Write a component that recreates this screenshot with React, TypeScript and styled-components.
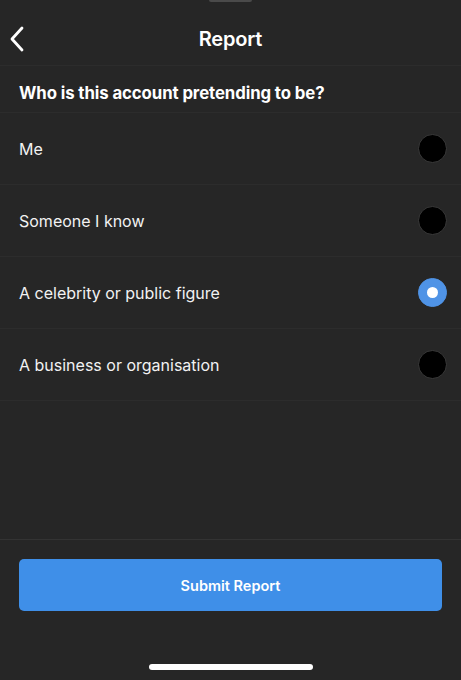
import React, { useState } from "react";
import styled, { createGlobalStyle } from "styled-components";

const options = [
    "Me",
    "Someone I know",
    "A celebrity or public figure",
    "A business or organisation",
];

const GlobalStyle = createGlobalStyle`
    html, body {
        margin: 0;
        padding: 0;
        background: #262626;
    }
    body {
        font-family: Inter, "Noto Sans", "Liberation Sans", sans-serif;
        -webkit-font-smoothing: antialiased;
    }
`;

const ChevronLeft = () => (
    <svg width="16" height="26" viewBox="0 0 16 26" fill="none">
        <path d="M13 2 L3 13 L13 24" stroke="#fff" strokeWidth="2.8" strokeLinecap="round" strokeLinejoin="round" />
    </svg>
);

const App = () => {
    const [selected, setSelected] = useState(2);

    return (
        <Screen>
            <GlobalStyle />
            <Grabber />
            <Header>
                <BackButton aria-label="Back">
                    <ChevronLeft />
                </BackButton>
                <Title>Report</Title>
            </Header>
            <Question>Who is this account pretending to be?</Question>
            <List>
                {options.map((label, i) => (
                    <Option key={label} onClick={() => setSelected(i)}>
                        <span>{label}</span>
                        <Radio checked={selected === i} />
                    </Option>
                ))}
            </List>
            <Footer>
                <SubmitButton>Submit Report</SubmitButton>
            </Footer>
            <HomeIndicator />
        </Screen>
    );
};

const Screen = styled.div`
    position: relative;
    width: 461px;
    height: 680px;
    background: #262626;
    color: #fff;
    display: flex;
    flex-direction: column;
    overflow: hidden;
`;

const Grabber = styled.div`
    position: absolute;
    top: 0;
    left: 209px;
    width: 43px;
    height: 2px;
    border-radius: 0 0 2px 2px;
    background: #4a4a4a;
`;

const Header = styled.div`
    position: relative;
    height: 66px;
    flex-shrink: 0;
    display: flex;
    align-items: center;
    justify-content: center;
    border-bottom: 1px solid #2c2c2c;
    box-sizing: border-box;
`;

const BackButton = styled.button`
    position: absolute;
    left: 9px;
    top: 26px;
    padding: 0;
    border: 0;
    background: none;
    display: flex;
    cursor: pointer;
`;

const Title = styled.div`
    font-size: 20px;
    font-weight: 600;
    letter-spacing: -0.2px;
    margin-top: 12px;
`;

const Question = styled.div`
    height: 47px;
    flex-shrink: 0;
    box-sizing: border-box;
    padding: 17px 19px 0;
    font-size: 16.8px;
    font-weight: 700;
    letter-spacing: -0.1px;
    border-bottom: 1px solid #2c2c2c;
`;

const List = styled.div`
    display: flex;
    flex-direction: column;
    flex: 1;
`;

const Option = styled.div`
    height: 72px;
    box-sizing: border-box;
    padding: 0 14px 0 19px;
    display: flex;
    align-items: center;
    justify-content: space-between;
    border-bottom: 1px solid #2c2c2c;
    font-size: 16px;
    font-weight: 400;
    color: #f2f2f2;
    cursor: pointer;
`;

const Radio = styled.div<{ checked: boolean }>`
    width: 29px;
    height: 29px;
    box-sizing: border-box;
    border-radius: 50%;
    background: ${(p) => (p.checked ? "#4f93e6" : "#000")};
    border: 1px solid ${(p) => (p.checked ? "#4f93e6" : "#3a3a3a")};
    display: flex;
    align-items: center;
    justify-content: center;
    &::after {
        content: "";
        display: ${(p) => (p.checked ? "block" : "none")};
        width: 11px;
        height: 11px;
        border-radius: 50%;
        background: #fff;
    }
`;

const Footer = styled.div`
    height: 141px;
    flex-shrink: 0;
    box-sizing: border-box;
    border-top: 1px solid #333;
    padding: 19px 19px 0;
`;

const SubmitButton = styled.button`
    width: 100%;
    height: 52px;
    border: 0;
    border-radius: 5px;
    background: #3f8fe8;
    color: #fff;
    font-family: inherit;
    font-size: 14.5px;
    font-weight: 600;
    cursor: pointer;
`;

const HomeIndicator = styled.div`
    position: absolute;
    left: 149px;
    bottom: 10px;
    width: 164px;
    height: 6px;
    border-radius: 3px;
    background: #fff;
`;

export default App;
